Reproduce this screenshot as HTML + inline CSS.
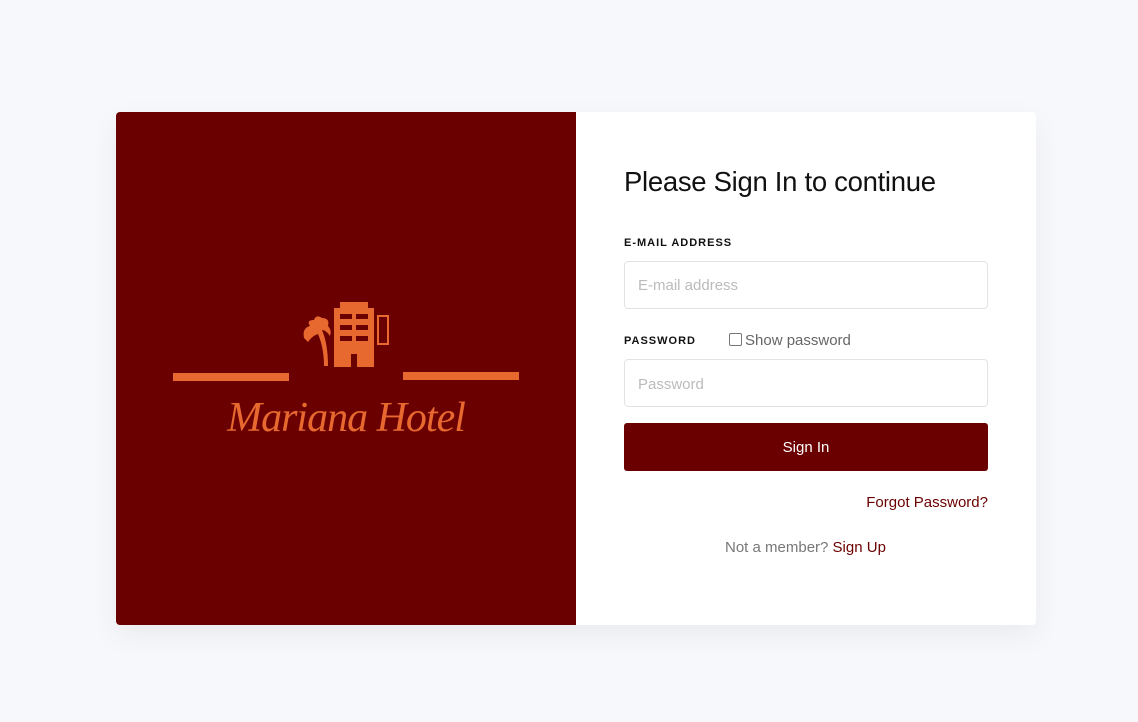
<!DOCTYPE html>
<html><head><style>
body{margin:0;width:1138px;height:722px;background:#f7f8fc;font-family:"Liberation Sans",sans-serif;position:relative;overflow:hidden}
.card{position:absolute;left:116px;top:112px;width:920px;height:513px;background:#fff;border-radius:4px;box-shadow:0 10px 30px rgba(0,0,0,.06);overflow:hidden}
.left{position:absolute;left:0;top:0;width:460px;height:513px;background:#6b0000}
.o{background:#e8692f;position:absolute}
h1{position:absolute;left:508px;top:54px;margin:0;font-weight:normal;font-size:27.5px;color:#111;letter-spacing:-.3px}
.lbl{position:absolute;font-size:11px;font-weight:bold;letter-spacing:1px;color:#111}
.inp{position:absolute;left:508px;width:364px;height:48px;border:1px solid #e3e3e3;border-radius:4px;box-sizing:border-box;padding-left:13px;line-height:46px;color:#bbb;font-size:15px}
.btn{position:absolute;left:508px;top:311px;width:364px;height:48px;background:#6b0000;border-radius:3px;color:#fff;text-align:center;line-height:50px;font-size:15px}
</style></head><body>
<div class="card">
<div class="left">
<div class="o" style="left:57px;top:261px;width:116px;height:8px"></div>
<div class="o" style="left:287px;top:260px;width:116px;height:8px"></div>
<svg style="position:absolute;left:180px;top:186px" width="100" height="70" viewBox="0 0 100 70">
<g fill="#e8692f">
<rect x="44" y="4" width="28" height="8"/>
<rect x="38" y="10" width="40" height="59"/>
<rect x="82" y="18" width="10" height="28" fill="none" stroke="#e8692f" stroke-width="2"/>
<path d="M8 40 Q6 30 14 28 Q10 22 18 22 Q20 16 26 20 Q34 20 32 28 Q36 32 34 38 Q30 32 26 32 Q32 46 32 68 L28 68 Q28 50 22 36 Q16 38 12 44Z"/>
</g>
<g fill="#6b0000"><rect x="44" y="16" width="12" height="5"/><rect x="60" y="16" width="12" height="5"/><rect x="44" y="27" width="12" height="5"/><rect x="60" y="27" width="12" height="5"/><rect x="44" y="38" width="12" height="5"/><rect x="60" y="38" width="12" height="5"/><rect x="55" y="56" width="6" height="13"/></g>
</svg>
<div style="position:absolute;left:100px;top:282px;width:260px;text-align:center;color:#e8692f;font-family:'Liberation Serif',serif;font-style:italic;font-size:42px;letter-spacing:-1px">Mariana Hotel</div>
</div>
<h1>Please Sign In to continue</h1>
<div class="lbl" style="left:508px;top:125px">E-MAIL ADDRESS</div>
<div class="inp" style="top:149px;line-height:48px">E-mail address</div>
<div class="lbl" style="left:508px;top:223px">PASSWORD</div>
<div style="position:absolute;left:613px;top:220px;font-size:15px;color:#666"><span style="display:inline-block;width:11px;height:11px;border:1px solid #777;border-radius:2px;vertical-align:-1px;margin-right:3px"></span>Show password</div>
<div class="inp" style="top:247px;line-height:50px">Password</div>
<div class="btn">Sign In</div>
<div style="position:absolute;right:48px;top:382px;font-size:15px;color:#6b0000">Forgot Password?</div>
<div style="position:absolute;left:609px;top:427px;font-size:15px;color:#777">Not a member? <span style="color:#6b0000">Sign Up</span></div>
</div>
</body></html>
